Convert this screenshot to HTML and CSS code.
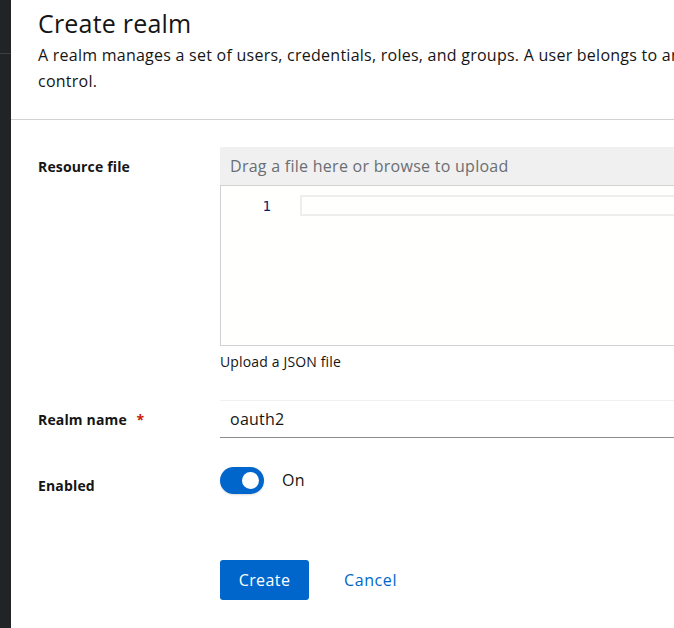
FILE: index.html
```html
<!DOCTYPE html>
<html lang="en">
<head>
<meta charset="utf-8">
<title>Create realm</title>
<link rel="stylesheet" href="styles.css">
</head>
<body>
<div class="app">
  <aside class="sidebar"><div class="sidebar-top"></div></aside>
  <main class="main">
    <header class="page-header">
      <h1 class="title">Create realm</h1>
      <p class="desc">A realm manages a set of users, credentials, roles, and groups. A user belongs to and logs into a realm. Realms are isolated from one another and can only manage and authenticate the users that they<br>control.</p>
    </header>
    <form class="form">
      <div class="row row-file">
        <label class="label">Resource file</label>
        <div class="control">
          <div class="upload">
            <div class="upload-bar">Drag a file here or browse to upload</div>
            <div class="editor">
              <div class="gutter">1</div>
              <div class="code"><div class="active-line"></div></div>
            </div>
          </div>
          <div class="helper">Upload a JSON file</div>
        </div>
      </div>
      <div class="row row-name">
        <label class="label">Realm name <span class="req">*</span></label>
        <div class="control">
          <div class="input">oauth2</div>
        </div>
      </div>
      <div class="row row-enabled">
        <label class="label label-enabled">Enabled</label>
        <div class="control switch-wrap">
          <span class="switch"><span class="knob"></span></span>
          <span class="switch-text">On</span>
        </div>
      </div>
      <div class="row row-actions">
        <div class="label"></div>
        <div class="control actions">
          <button type="button" class="btn-primary">Create</button>
          <button type="button" class="btn-link">Cancel</button>
        </div>
      </div>
    </form>
  </main>
</div>
</body>
</html>
```
FILE: styles.css
```css
* { box-sizing: border-box; }
html, body { margin: 0; padding: 0; }
body {
  font-family: "Open Sans", "Liberation Sans", sans-serif;
  color: #151515;
  background: #fff;
  width: 674px;
  height: 628px;
  overflow: hidden;
}
.app { display: flex; height: 628px; }
.sidebar { width: 11px; flex: none; background: #212427; }
.sidebar-top { height: 54px; border-bottom: 1px solid #3c3f42; }
.main { flex: 1; min-width: 0; overflow: hidden; }
.page-header {
  padding: 7px 0 25px 27px;
  border-bottom: 1px solid #d2d2d2;
  width: 2000px;
}
.title { margin: 0; font-size: 25px; font-weight: 400; line-height: 32px; letter-spacing: 0.2px; }
.desc { margin: 3px 0 0; font-size: 16px; line-height: 26px; letter-spacing: 0.25px; }
.form { padding: 27px 0 0 27px; }
.row { display: flex; }
.label {
  width: 182px; flex: none; font-size: 14px; font-weight: 700; line-height: 21px; letter-spacing: 0.15px;
}
.control { width: 600px; flex: none; }
.row-file .label { padding-top: 9px; }
.upload-bar {
  height: 39px; background: #f0f0f0; border-bottom: 1px solid #d2d2d2;
  padding: 8px 10px; font-size: 16px; line-height: 22px; color: #6a6e73; letter-spacing: 0.27px;
}
.editor {
  display: flex; height: 160px; background: #fffffd;
  border-left: 1px solid #d2d2d2; border-bottom: 1px solid #d2d2d2;
}
.gutter { width: 79px; text-align: right; padding: 10px 29px 0 0; font-size: 14px; line-height: 20px; color: #0b216f; font-family: "DejaVu Sans Mono", monospace; }
.code { flex: 1; padding-top: 9px; }
.active-line { height: 21px; border: 2px solid #eeeeee; border-right: none; }
.helper { margin-top: 6px; font-size: 14px; line-height: 20px; letter-spacing: 0.15px; }
.row-name { margin-top: 28px; }
.row-name .label { padding-top: 9px; }
.req { color: #c9190b; margin-left: 6px; }
.input {
  height: 38px; border-top: 1px solid #f0f0f0; border-bottom: 1px solid #8a8d90;
  padding: 7px 10px; font-size: 16px; line-height: 22px; letter-spacing: 0.25px;
}
.row-enabled { margin-top: 29px; }
.label-enabled { padding-top: 8px; }
.switch-wrap { display: flex; align-items: center; height: 27px; }
.switch {
  position: relative; width: 44px; height: 27px; border-radius: 14px; background: #0066cc;
  box-shadow: 0 1px 2px rgba(3, 3, 3, 0.15);
}
.knob {
  position: absolute; right: 5px; top: 5px; width: 17px; height: 17px; border-radius: 50%; background: #fff;
}
.switch-text { margin-left: 18px; font-size: 16px; line-height: 22px; margin-top: -2px; letter-spacing: 0.25px; }
.row-actions { margin-top: 64px; }
.actions { display: flex; align-items: center; gap: 17px; }
.btn-primary {
  width: 89px; height: 40px; border: none; border-radius: 3px; background: #0066cc; color: #fff;
  font-family: inherit; font-size: 16px; padding: 0; letter-spacing: 0.4px;
}
.btn-link {
  border: none; background: none; color: #0066cc; font-family: inherit; font-size: 16px; padding: 6px 18px; letter-spacing: 0.6px;
}
```
